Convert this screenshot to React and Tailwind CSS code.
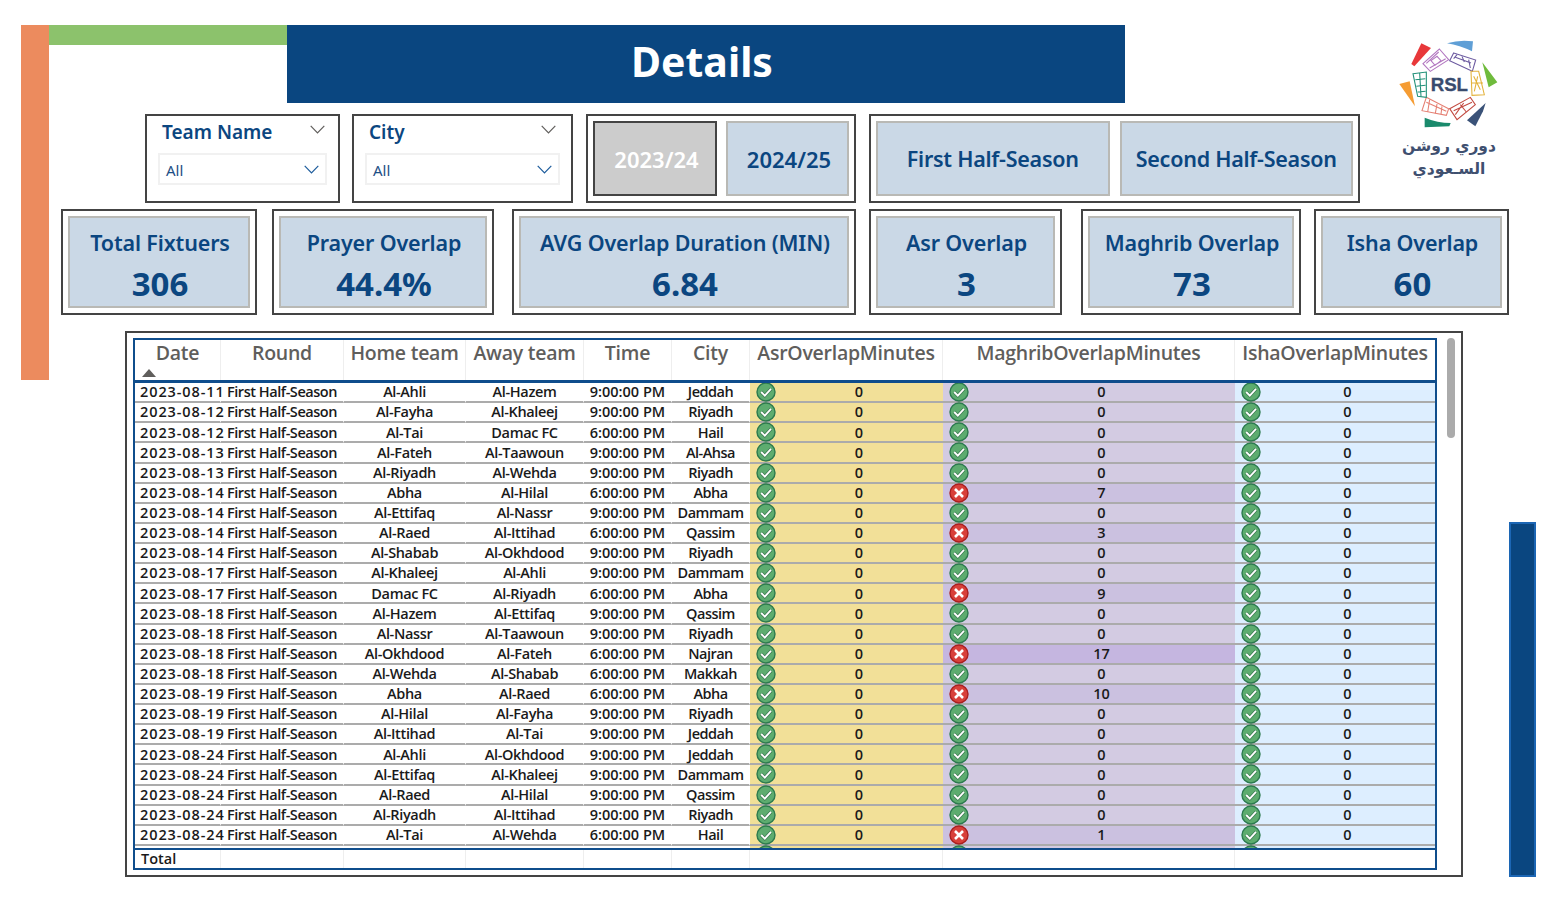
import React from "react";

const rows = [
  ["2023-08-11","Al-Ahli","Al-Hazem","9:00:00 PM","Jeddah",0],
  ["2023-08-12","Al-Fayha","Al-Khaleej","9:00:00 PM","Riyadh",0],
  ["2023-08-12","Al-Tai","Damac FC","6:00:00 PM","Hail",0],
  ["2023-08-13","Al-Fateh","Al-Taawoun","9:00:00 PM","Al-Ahsa",0],
  ["2023-08-13","Al-Riyadh","Al-Wehda","9:00:00 PM","Riyadh",0],
  ["2023-08-14","Abha","Al-Hilal","6:00:00 PM","Abha",7],
  ["2023-08-14","Al-Ettifaq","Al-Nassr","9:00:00 PM","Dammam",0],
  ["2023-08-14","Al-Raed","Al-Ittihad","6:00:00 PM","Qassim",3],
  ["2023-08-14","Al-Shabab","Al-Okhdood","9:00:00 PM","Riyadh",0],
  ["2023-08-17","Al-Khaleej","Al-Ahli","9:00:00 PM","Dammam",0],
  ["2023-08-17","Damac FC","Al-Riyadh","6:00:00 PM","Abha",9],
  ["2023-08-18","Al-Hazem","Al-Ettifaq","9:00:00 PM","Qassim",0],
  ["2023-08-18","Al-Nassr","Al-Taawoun","9:00:00 PM","Riyadh",0],
  ["2023-08-18","Al-Okhdood","Al-Fateh","6:00:00 PM","Najran",17],
  ["2023-08-18","Al-Wehda","Al-Shabab","6:00:00 PM","Makkah",0],
  ["2023-08-19","Abha","Al-Raed","6:00:00 PM","Abha",10],
  ["2023-08-19","Al-Hilal","Al-Fayha","9:00:00 PM","Riyadh",0],
  ["2023-08-19","Al-Ittihad","Al-Tai","9:00:00 PM","Jeddah",0],
  ["2023-08-24","Al-Ahli","Al-Okhdood","9:00:00 PM","Jeddah",0],
  ["2023-08-24","Al-Ettifaq","Al-Khaleej","9:00:00 PM","Dammam",0],
  ["2023-08-24","Al-Raed","Al-Hilal","9:00:00 PM","Qassim",0],
  ["2023-08-24","Al-Riyadh","Al-Ittihad","9:00:00 PM","Riyadh",0],
  ["2023-08-24","Al-Tai","Al-Wehda","6:00:00 PM","Hail",1],
];

const GRID = "grid grid-cols-[86px_123px_122px_118px_88px_78px_193px_292px_200px]";

function Check() {
  return (
    <svg width="20" height="20" viewBox="0 0 20 20" className="shrink-0 relative z-10 -my-[1px]">
      <circle cx="10" cy="10" r="9" fill="#5dac6f" stroke="#2c7a4e" strokeWidth="1.4" />
      <path d="M5.2 10 L8.8 13.6 L15 6.8" fill="none" stroke="#3d7a52" strokeWidth="3.2" />
      <path d="M5.2 10 L8.8 13.6 L15 6.8" fill="none" stroke="#ffffff" strokeWidth="1.8" />
    </svg>
  );
}

function Cross() {
  return (
    <svg width="20" height="20" viewBox="0 0 20 20" className="shrink-0 relative z-10 -my-[1px]">
      <circle cx="10" cy="10" r="9" fill="#d8403a" stroke="#a91f1f" strokeWidth="1.4" />
      <path d="M6 6 L14 14 M14 6 L6 14" fill="none" stroke="#ffffff" strokeWidth="2.6" />
    </svg>
  );
}

function Chevron({ color, w = 15 }) {
  return (
    <svg width={w} height="9" viewBox="0 0 15 9" className="shrink-0">
      <path d="M0.7 0.8 L7.5 7.8 L14.3 0.8" fill="none" stroke={color} strokeWidth="1.2" />
    </svg>
  );
}

function Slicer({ title, width, chevronPad }) {
  return (
    <div className={`${width} h-[89px] border-2 border-[#444444] bg-white pt-[4px] px-[11px] font-['Noto_Sans'] text-[#0b4680]`}>
      <div className={`flex items-start justify-between h-[33px] pl-[4px] ${chevronPad}`}>
        <span className="text-[19px] leading-[24px] font-semibold">{title}</span>
        <span className="pt-[5px]"><Chevron color="#605e5c" /></span>
      </div>
      <div className="flex items-center justify-between h-[32px] border-2 border-[#f1f1f1] pl-[6px] pr-[6px]">
        <span className="text-[15px] leading-none pt-[3px] text-[#1d4f86]">All</span>
        <Chevron color="#1d5c9c" />
      </div>
    </div>
  );
}

function Tile({ children, width, active, tight }) {
  return (
    <div
      className={`${width} h-full flex items-center justify-center border-2 pt-[1px] font-semibold whitespace-nowrap ${
        tight ? "text-[21.5px] tracking-[-0.25px]" : "text-[22px] pl-[3px]"
      } ${active ? "bg-[#cccccc] border-[#444444] text-white" : "bg-[#cad8e6] border-[#b9b9b5] text-[#0b4680]"}`}
    >
      {children}
    </div>
  );
}

function Kpi({ title, value, width }) {
  return (
    <div className={`${width} h-[106px] border-2 border-[#444444] bg-white p-[5px] font-['Noto_Sans'] text-[#0b4680]`}>
      <div className="h-full bg-[#cad8e6] border-2 border-[#b9b9b5] flex flex-col items-center pt-[11px] pl-[2px]">
        <div className="text-[21.5px] leading-[28px] font-semibold tracking-[-0.15px] whitespace-nowrap">{title}</div>
        <div className="text-[33px] leading-[40px] mt-[7px] font-bold">{value}</div>
      </div>
    </div>
  );
}

function Logo() {
  return (
    <div className="w-[104px] flex flex-col items-center">
      <svg width="104" height="90" viewBox="170 50 312 270">
        <path d="M213 128 L243 66 L272 80 L222 135 Z" fill="#e8383a" />
        <path d="M320 66 Q358 54 398 60 L395 90 Q358 72 320 66 Z" fill="#5f9fd6" />
        <path d="M426 123 L471 183 L445 198 Z" fill="#6fbb3c" />
        <path d="M177 188 L208 180 L224 255 Z" fill="#f59c33" />
        <path d="M380 297 L436 245 L428 270 L405 315 Z" fill="#3a5278" />
        <path d="M253 289 Q292 305 331 305 L327 315 L253 318 Z" fill="#1a8a6c" />
        <g fill="none" strokeWidth="3.2">
          <g stroke="#b277c0">
            <path d="M248 127 L297 83 L325 115 L270 150 Z" />
            <path d="M272 118 L290 105 L302 118 L284 132 Z M258 126 L295 92 M268 140 L316 112" />
          </g>
          <g stroke="#6c5aa0">
            <path d="M340 95 L406 116 L396 150 L328 118 Z" />
            <path d="M345 108 L392 125 M365 105 L372 122 M350 100 L340 112 M385 115 L390 140" />
          </g>
          <g stroke="#e3b23c">
            <path d="M392 150 L415 150 L432 220 L395 222 Z" />
            <path d="M400 165 L420 205 M412 165 L402 210 M395 185 L428 185" />
          </g>
          <g stroke="#e57f72">
            <path d="M258 228 L325 262 L318 282 L245 268 Z" />
            <path d="M258 243 L318 270 M268 235 L262 272 M290 248 L285 276 M305 255 L302 278" />
          </g>
          <g stroke="#c24a40">
            <path d="M328 262 L390 228 L405 250 L350 295 Z" />
            <path d="M340 268 L395 243 M360 250 L378 272 M345 280 L370 245" />
          </g>
          <g stroke="#1f8f78">
            <path d="M218 157 L258 152 L258 228 L232 225 Z" />
            <path d="M225 175 L255 172 M228 195 L256 192 M232 212 L256 210 M238 155 L242 225" />
          </g>
        </g>
        <text x="327" y="208" textAnchor="middle" fontFamily="Liberation Sans" fontWeight="700" fontSize="56" stroke="#394b6e" strokeWidth="1" fill="#394b6e">RSL</text>
      </svg>
      <div dir="rtl" className="mt-[7px] text-center font-['DejaVu_Sans'] font-bold text-[#3f5070] text-[15.5px] leading-[23px] whitespace-nowrap">
        <div>دوري روشن</div>
        <div>السـعودي</div>
      </div>
    </div>
  );
}

function Row({ r }) {
  const [date, home, away, time, city, m] = r;
  const base = "border-b-2 border-[#ababab] flex items-center justify-center leading-none whitespace-nowrap";
  const plain = `${base} border-r border-r-white pt-[1px]`;
  const mBg = m >= 17 ? "bg-[#c5b6e0]" : m > 0 ? "bg-[#cbc1e0]" : "bg-[#d3cbe2]";
  return (
    <div className={`${GRID} h-[20.13px] text-[14.5px] font-semibold text-[#1a1a1a]`}>
      <div className={`${plain} !justify-start pl-[5px] tracking-[0.9px]`}>{date}</div>
      <div className={`${plain} tracking-[-0.45px]`}>First Half-Season</div>
      <div className={`${plain} tracking-[-0.35px]`}>{home}</div>
      <div className={`${plain} tracking-[-0.35px]`}>{away}</div>
      <div className={plain}>{time}</div>
      <div className={`${plain} tracking-[-0.5px]`}>{city}</div>
      <div className={`${base} bg-[#f2e098] pl-[6px] !justify-start`}>
        <Check />
        <span className="flex-1 text-center pr-[1px] pt-[1px]">0</span>
      </div>
      <div className={`${base} ${mBg} pl-[6px] !justify-start`}>
        {m > 0 ? <Cross /> : <Check />}
        <span className="flex-1 text-center pr-[1px] pt-[1px]">{m}</span>
      </div>
      <div className={`${base} bg-[#ddeeff] pl-[6px] !justify-start`}>
        <Check />
        <span className="flex-1 text-center pr-[1px] pt-[1px]">0</span>
      </div>
    </div>
  );
}

function ClippedRow() {
  return (
    <div className={`${GRID} h-[20.13px]`}>
      <div /><div /><div /><div /><div /><div />
      <div className="bg-[#f2e098] pl-[6px]"><Check /></div>
      <div className="bg-[#d3cbe2] pl-[6px]"><Check /></div>
      <div className="bg-[#ddeeff] pl-[6px]"><Check /></div>
    </div>
  );
}

function HeaderCell({ children, sort, last }) {
  return (
    <div className={`h-full flex flex-col items-center ${last ? "" : "border-r border-[#eeeeee]"}`}>
      <span className="text-[19.5px] leading-[26px] font-semibold tracking-[-0.25px] text-[#5f5e5c] whitespace-nowrap">{children}</span>
      {sort && (
        <svg width="14" height="8" viewBox="0 0 14 8" className="self-start ml-[7px] mt-[3px]">
          <path d="M7 0 L14 8 L0 8 Z" fill="#605e5c" />
        </svg>
      )}
    </div>
  );
}

export default function App() {
  const headers = ["Date","Round","Home team","Away team","Time","City","AsrOverlapMinutes","MaghribOverlapMinutes","IshaOverlapMinutes"];
  return (
    <div className="w-[1561px] h-[901px] bg-white overflow-hidden flex pt-[25px] pl-[21px]">
      <div className="w-[28px] h-[355px] bg-[#ec8b5e] shrink-0" />

      <div className="w-[1460px] shrink-0 flex flex-col">
        <div className="flex">
          <div className="w-[1311px] shrink-0">
            <div className="flex items-start">
              <div className="w-[238px] h-[20px] bg-[#8cc26c]" />
              <div className="w-[838px] h-[78px] bg-[#0a4680] flex items-center justify-center pr-[8px] pb-[5px] font-['Noto_Sans'] text-[41px] font-bold text-white">
                Details
              </div>
            </div>
            <div className="flex mt-[11px] ml-[96px]">
              <Slicer title="Team Name" width="w-[195px]" chevronPad="pr-[2px]" />
              <div className="w-[12px]" />
              <Slicer title="City" width="w-[221px]" chevronPad="pr-[4px]" />
              <div className="w-[13px]" />
              <div className="w-[270px] h-[89px] border-2 border-[#444444] bg-white p-[5px] flex gap-[9px] font-['Noto_Sans']">
                <Tile width="w-[124px]" active>2023/24</Tile>
                <Tile width="w-[123px]">2024/25</Tile>
              </div>
              <div className="w-[13px]" />
              <div className="w-[491px] h-[89px] border-2 border-[#444444] bg-white p-[5px] flex gap-[10px] font-['Noto_Sans']">
                <Tile width="w-[234px]" tight>First Half-Season</Tile>
                <Tile width="w-[234px]" tight>Second Half-Season</Tile>
              </div>
            </div>
          </div>
          <div className="ml-[37px] mt-[13px]">
            <Logo />
          </div>
        </div>

        <div className="flex mt-[6px] ml-[12px]">
          <Kpi title="Total Fixtuers" value="306" width="w-[196px] mr-[15px]" />
          <Kpi title="Prayer Overlap" value="44.4%" width="w-[222px] mr-[18px]" />
          <Kpi title="AVG Overlap Duration (MIN)" value="6.84" width="w-[344px] mr-[13px]" />
          <Kpi title="Asr Overlap" value="3" width="w-[193px] mr-[19px]" />
          <Kpi title="Maghrib Overlap" value="73" width="w-[220px] mr-[13px]" />
          <Kpi title="Isha Overlap" value="60" width="w-[195px]" />
        </div>

        <div className="ml-[76px] mt-[16px] w-[1338px] h-[546px] border-2 border-[#444444] bg-white flex pt-[5px] pl-[6px] font-['Open_Sans']">
          <div className="w-[1304px] h-[532px] border-2 border-[#0f4d8c] flex flex-col overflow-hidden">
            <div className={`${GRID} h-[40px] shrink-0 border-b-[3px] border-[#0f4d8c] box-content`}>
              {headers.map((h, i) => (
                <HeaderCell key={h} sort={i === 0} last={i === 8}>{h}</HeaderCell>
              ))}
            </div>
            <div className="h-[465px] shrink-0 overflow-hidden">
              {rows.map((r, i) => <Row key={i} r={r} />)}
              <ClippedRow />
            </div>
            <div className={`${GRID} flex-1 border-t-2 border-[#0f4d8c] text-[14.5px] font-semibold text-[#1a1a1a]`}>
              {headers.map((h, i) => (
                <div key={h} className={`pl-[6px] pt-[1px] flex items-center leading-none ${i === 8 ? "" : "border-r border-[#eeeeee]"}`}>
                  {i === 0 ? "Total" : ""}
                </div>
              ))}
            </div>
          </div>
          <div className="ml-[10px] w-[8px] h-[100px] rounded-full bg-[#ababab]" />
        </div>
      </div>

      <div className="w-[27px] h-[355px] mt-[497px] shrink-0 bg-[#0a4680] border-2 border-[#1c66b4]" />
    </div>
  );
}
